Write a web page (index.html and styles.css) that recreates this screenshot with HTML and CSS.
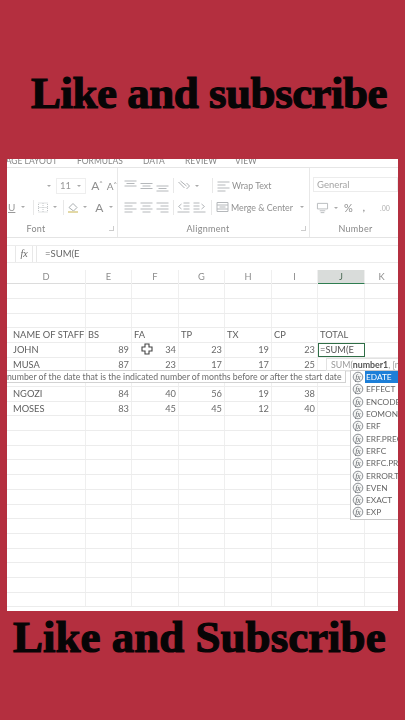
FILE: index.html
```html
<!DOCTYPE html>
<html lang="en">
<head>
<meta charset="utf-8">
<title>Like and subscribe</title>
<link rel="stylesheet" href="styles.css">
</head>
<body>
<svg class="defs" width="0" height="0" aria-hidden="true">
  <symbol id="lines-t" viewBox="0 0 14 12"><path d="M1 1h12M3 3.500h8M1 6h12" stroke="#b5b8bb" fill="none"/></symbol>
  <symbol id="lines-m" viewBox="0 0 14 12"><path d="M1 3.500h12M3 6h8M1 8.500h12" stroke="#b5b8bb" fill="none"/></symbol>
  <symbol id="lines-b" viewBox="0 0 14 12"><path d="M1 6h12M3 8.500h8M1 11h12" stroke="#b5b8bb" fill="none"/></symbol>
  <symbol id="lines-a" viewBox="0 0 14 12"><path d="M1 2h12M1 5h8M1 8h12M1 11h8" stroke="#b5b8bb" fill="none"/></symbol>
  <symbol id="lines-c" viewBox="0 0 14 12"><path d="M1 2h12M3 5h8M1 8h12M3 11h8" stroke="#b5b8bb" fill="none"/></symbol>
  <symbol id="lines-r" viewBox="0 0 14 12"><path d="M1 2h12M5 5h8M1 8h12M5 11h8" stroke="#b5b8bb" fill="none"/></symbol>
  <symbol id="fx" viewBox="0 0 12 12"><circle cx="6" cy="6" r="4.800" fill="#f4f5f4" stroke="#8d9196"/><text x="6" y="8.500" font-size="7.500" font-style="italic" font-family="Liberation Serif, serif" text-anchor="middle" fill="#5c6066">fx</text></symbol>
</svg>

<h1 class="title title-top">Like and subscribe</h1>

<main class="shot">
  <nav class="tabs">
    <span class="tab tab-page">PAGE LAYOUT</span>
    <span class="tab tab-formulas">FORMULAS</span>
    <span class="tab tab-data">DATA</span>
    <span class="tab tab-review">REVIEW</span>
    <span class="tab tab-view">VIEW</span>
  </nav>

  <section class="ribbon">
    <div class="group group-font">
      <div class="tools tools-font-1">
        <span class="arrow"></span>
        <span class="size-box"><span>11</span><span class="arrow"></span></span>
        <span class="glyph glyph-lg">A<sup>^</sup></span>
        <span class="glyph glyph-md">A<sup>^</sup></span>
      </div>
      <div class="tools tools-font-2">
        <span class="glyph u">U</span><span class="arrow"></span><span class="sep"></span>
        <svg class="ic" viewBox="0 0 14 12"><path d="M2.500 1.500h9v9h-9zM7 1.500v9M2.500 6h9" fill="none" stroke="#c3c6c8" stroke-dasharray="1 1"/></svg>
        <span class="arrow"></span><span class="sep sep-tight"></span>
        <svg class="ic" viewBox="0 0 14 13"><path d="M3 6.500 7 2.500l4 4-3.500 3.500z" fill="none" stroke="#a9aeb0"/><path d="M2 11h10" stroke="#e3d9a6" stroke-width="2"/></svg>
        <span class="arrow"></span>
        <span class="glyph glyph-a">A</span><span class="arrow arrow-last"></span>
      </div>
      <div class="group-label group-label-font"><span>Font</span><i class="launcher"></i></div>
    </div>

    <div class="group group-align">
      <div class="tools tools-align">
        <svg class="ic14"><use href="#lines-t"/></svg>
        <svg class="ic14"><use href="#lines-m"/></svg>
        <svg class="ic14"><use href="#lines-b"/></svg>
        <span class="sep"></span>
        <svg class="ic14" viewBox="0 0 14 12"><path d="M2 2l6 6M4 1l6 5M10 3l3 3-3 3" fill="none" stroke="#aeb1b4"/></svg>
        <span class="arrow"></span>
        <span class="sep sep-far"></span>
        <svg class="ic14"><use href="#lines-a"/></svg>
        <span class="label">Wrap Text</span>
      </div>
      <div class="tools tools-align">
        <svg class="ic14"><use href="#lines-a"/></svg>
        <svg class="ic14"><use href="#lines-c"/></svg>
        <svg class="ic14"><use href="#lines-r"/></svg>
        <span class="sep"></span>
        <svg class="ic14" viewBox="0 0 14 12"><path d="M7 2h6M7 5h6M7 8h6M1 11h12M5 3 2 5.500 5 8" fill="none" stroke="#b5b8bb"/></svg>
        <svg class="ic14" viewBox="0 0 14 12"><path d="M1 2h6M1 5h6M1 8h6M1 11h12M9 3l3 2.500L9 8" fill="none" stroke="#b5b8bb"/></svg>
        <span class="sep sep-near"></span>
        <svg class="ic14" viewBox="0 0 14 12"><path d="M1.500 1.500h11v9h-11zM1.500 4h11M1.500 8h11M4 6h6" fill="none" stroke="#b5b8bb"/></svg>
        <span class="label">Merge &amp; Center</span>
        <span class="arrow arrow-end"></span>
      </div>
      <div class="group-label group-label-align"><span>Alignment</span><i class="launcher"></i></div>
    </div>

    <div class="group group-number">
      <div class="general">General</div>
      <div class="tools tools-number">
        <svg class="ic14" viewBox="0 0 14 13"><path d="M1.500 1.500h11v6h-11zM4 9.500h6M5 11.500h4" fill="none" stroke="#b5b8bb"/></svg>
        <span class="arrow"></span>
        <span class="glyph pct">%</span>
        <span class="glyph comma">,</span>
        <span class="glyph dec">.00</span>
      </div>
      <div class="group-label"><span>Number</span></div>
    </div>
  </section>

  <div class="formula-bar">
    <span class="fx-btn">fx</span>
    <span class="formula-input">=SUM(E</span>
  </div>

  <section class="sheet">
    <div class="row row-head">
      <span class="c">D</span><span class="c">E</span><span class="c">F</span><span class="c">G</span><span class="c">H</span><span class="c">I</span><span class="c col-on">J</span><span class="c">K</span>
    </div>
    <div class="row"><span class="c"></span><span class="c"></span><span class="c"></span><span class="c"></span><span class="c"></span><span class="c"></span><span class="c"></span><span class="c"></span></div>
    <div class="row"><span class="c"></span><span class="c"></span><span class="c"></span><span class="c"></span><span class="c"></span><span class="c"></span><span class="c"></span><span class="c"></span></div>
    <div class="row"><span class="c"></span><span class="c"></span><span class="c"></span><span class="c"></span><span class="c"></span><span class="c"></span><span class="c"></span><span class="c"></span></div>
    <div class="row row-data">
      <span class="c">NAME OF STAFF</span><span class="c">BS</span><span class="c">FA</span><span class="c">TP</span><span class="c">TX</span><span class="c">CP</span><span class="c">TOTAL</span><span class="c"></span>
    </div>
    <div class="row row-data">
      <span class="c">JOHN</span><span class="c n">89</span><span class="c n">34</span><span class="c n">23</span><span class="c n">19</span><span class="c n">23</span><span class="c cell-on">=SUM(E</span><span class="c"></span>
    </div>
    <div class="row row-data">
      <span class="c">MUSA</span><span class="c n">87</span><span class="c n">23</span><span class="c n">17</span><span class="c n">17</span><span class="c n">25</span><span class="c"></span><span class="c"></span>
    </div>
    <div class="row"><span class="c"></span><span class="c"></span><span class="c"></span><span class="c"></span><span class="c"></span><span class="c"></span><span class="c"></span><span class="c"></span></div>
    <div class="row row-data">
      <span class="c">NGOZI</span><span class="c n">84</span><span class="c n">40</span><span class="c n">56</span><span class="c n">19</span><span class="c n">38</span><span class="c"></span><span class="c"></span>
    </div>
    <div class="row row-data">
      <span class="c">MOSES</span><span class="c n">83</span><span class="c n">45</span><span class="c n">45</span><span class="c n">12</span><span class="c n">40</span><span class="c"></span><span class="c"></span>
    </div>
    <div class="row"><span class="c"></span><span class="c"></span><span class="c"></span><span class="c"></span><span class="c"></span><span class="c"></span><span class="c"></span><span class="c"></span></div>
    <div class="row"><span class="c"></span><span class="c"></span><span class="c"></span><span class="c"></span><span class="c"></span><span class="c"></span><span class="c"></span><span class="c"></span></div>
    <div class="row"><span class="c"></span><span class="c"></span><span class="c"></span><span class="c"></span><span class="c"></span><span class="c"></span><span class="c"></span><span class="c"></span></div>
    <div class="row"><span class="c"></span><span class="c"></span><span class="c"></span><span class="c"></span><span class="c"></span><span class="c"></span><span class="c"></span><span class="c"></span></div>
    <div class="row"><span class="c"></span><span class="c"></span><span class="c"></span><span class="c"></span><span class="c"></span><span class="c"></span><span class="c"></span><span class="c"></span></div>
    <div class="row"><span class="c"></span><span class="c"></span><span class="c"></span><span class="c"></span><span class="c"></span><span class="c"></span><span class="c"></span><span class="c"></span></div>
    <div class="row"><span class="c"></span><span class="c"></span><span class="c"></span><span class="c"></span><span class="c"></span><span class="c"></span><span class="c"></span><span class="c"></span></div>
    <div class="row"><span class="c"></span><span class="c"></span><span class="c"></span><span class="c"></span><span class="c"></span><span class="c"></span><span class="c"></span><span class="c"></span></div>
    <div class="row"><span class="c"></span><span class="c"></span><span class="c"></span><span class="c"></span><span class="c"></span><span class="c"></span><span class="c"></span><span class="c"></span></div>
    <div class="row"><span class="c"></span><span class="c"></span><span class="c"></span><span class="c"></span><span class="c"></span><span class="c"></span><span class="c"></span><span class="c"></span></div>
    <div class="row"><span class="c"></span><span class="c"></span><span class="c"></span><span class="c"></span><span class="c"></span><span class="c"></span><span class="c"></span><span class="c"></span></div>
    <div class="row"><span class="c"></span><span class="c"></span><span class="c"></span><span class="c"></span><span class="c"></span><span class="c"></span><span class="c"></span><span class="c"></span></div>
    <div class="row"><span class="c"></span><span class="c"></span><span class="c"></span><span class="c"></span><span class="c"></span><span class="c"></span><span class="c"></span><span class="c"></span></div>

    <svg class="cursor" viewBox="0 0 12 12"><path d="M4 1h4v3h3v4H8v3H4V8H1V4h3z" fill="#fff" stroke="#444" stroke-width="1.100"/></svg>

    <div class="hint-desc">number of the date that is the indicated number of months before or after the start date</div>
    <div class="hint-sum">SUM(<b>number1</b>, [n</div>
    <ul class="suggest">
      <li class="on"><svg class="fn"><use href="#fx"/></svg><span>EDATE</span></li>
      <li><svg class="fn"><use href="#fx"/></svg><span>EFFECT</span></li>
      <li><svg class="fn"><use href="#fx"/></svg><span>ENCODEURL</span></li>
      <li><svg class="fn"><use href="#fx"/></svg><span>EOMONTH</span></li>
      <li><svg class="fn"><use href="#fx"/></svg><span>ERF</span></li>
      <li><svg class="fn"><use href="#fx"/></svg><span>ERF.PRECISE</span></li>
      <li><svg class="fn"><use href="#fx"/></svg><span>ERFC</span></li>
      <li><svg class="fn"><use href="#fx"/></svg><span>ERFC.PRECISE</span></li>
      <li><svg class="fn"><use href="#fx"/></svg><span>ERROR.TYPE</span></li>
      <li><svg class="fn"><use href="#fx"/></svg><span>EVEN</span></li>
      <li><svg class="fn"><use href="#fx"/></svg><span>EXACT</span></li>
      <li><svg class="fn"><use href="#fx"/></svg><span>EXP</span></li>
    </ul>
  </section>
</main>

<h2 class="title title-bottom">Like and Subscribe</h2>
</body>
</html>
```
FILE: styles.css
```css
* { box-sizing: border-box; }
html, body { margin: 0; padding: 0; }
body {
  width: 405px;
  height: 720px;
  overflow: hidden;
  background: #b42f3f;
  font-family: "Lato", "Liberation Sans", sans-serif;
  display: flex;
  flex-direction: column;
}
.defs { position: absolute; }

.title {
  margin: 0;
  color: #070506;
  font-family: "Liberation Serif", serif;
  font-weight: 700;
  font-size: 45px;
  line-height: 50px;
  white-space: nowrap;
  -webkit-text-stroke: 1.2px #070506;
}
.title-top { padding: 68px 0 0 31px; height: 159px; letter-spacing: -0.5px; }
.title-bottom { padding: 1px 0 0 13px; letter-spacing: 0; }

.shot {
  width: 391px;
  height: 452px;
  margin-left: 7px;
  background: #fff;
  color: #666;
  overflow: hidden;
  flex: none;
  display: flex;
  flex-direction: column;
  filter: blur(0.4px);
}

/* tabs */
.tabs {
  height: 9px;
  border-bottom: 1px solid #e6e6e6;
  display: flex;
  flex: none;
  font-size: 8.500px;
  color: #888;
  line-height: 4px;
  white-space: nowrap;
  overflow: hidden;
}
.tab { display: block; flex: none; }
.tab-page { width: 76px; margin-left: -6px; }
.tab-formulas { width: 66px; }
.tab-data { width: 42px; }
.tab-review { width: 50px; }

/* ribbon */
.ribbon {
  height: 70px;
  display: flex;
  background: #fff;
  border-bottom: 1px solid #e4e4e4;
  flex: none;
}
.group { display: flex; flex-direction: column; border-right: 1px solid #e8e8e8; }
.group-font { width: 111px; padding-top: 9px; }
.group-align { width: 192px; padding-top: 9px; padding-left: 5px; }
.group-number { flex: 1; border-right: 0; padding: 9px 0 0 3px; }
.tools { display: flex; align-items: center; flex: none; font-size: 9.500px; color: #9b9b9b; white-space: nowrap; }
.tools-font-1 { padding-left: 37px; height: 17px; margin-bottom: 2px; }
.tools-font-2 { padding-left: 1px; height: 22px; }
.arrow { width: 0; height: 0; border: 2px solid transparent; border-top: 2.500px solid #aaa; border-bottom: 0; margin: 0 3px; flex: none; }
.arrow-last { margin-left: 6px; }
.size-box {
  display: flex; align-items: center; justify-content: space-between;
  width: 31px; height: 16px; margin-left: 2px;
  border: 1px solid #eee; padding: 0 1px 0 3px; color: #999;
}
.glyph { color: #8f8f8f; flex: none; }
.glyph sup { font-size: 6px; line-height: 0; }
.glyph-lg { font-size: 12px; margin-left: 5px; }
.glyph-md { font-size: 10px; margin-left: 4px; }
.u { text-decoration: underline; font-size: 10px; color: #999; margin-right: 3px; }
.sep { width: 1px; height: 15px; background: #e8e8e8; margin: 0 1px 0 5px; flex: none; }
.sep-tight { margin-left: 3px; }
.ic { width: 14px; height: 13px; flex: none; margin-left: 1px; }
.ic14 { width: 15px; height: 12px; flex: none; margin-right: 1px; }
.glyph-a { font-size: 12px; margin-left: 5px; color: #8d8d8d; }
.tools-align { height: 17px; margin-bottom: 2px; }
.tools-align + .tools-align { height: 22px; margin-bottom: 0; }
.tools-align .sep { margin: 0 2px; }
.tools-align .sep-far { margin: 0 3px 0 10px; }
.tools-align .sep-near { margin: 0 3px; }
.label { font-size: 8.800px; color: #909090; }
.arrow-end { margin-left: 7px; }
.group-label {
  height: 13px; display: flex; align-items: center; justify-content: center;
  position: relative; font-size: 9px; color: #888; letter-spacing: 0.3px; flex: none; margin-top: 4px;
}
.group-label-font { padding-right: 52px; }
.group-label-align { padding-right: 16px; }
.group-number .group-label { margin-top: 6px; }
.launcher { position: absolute; right: 3px; top: 4px; width: 5px; height: 5px; border-right: 1px solid #ccc; border-bottom: 1px solid #ccc; }
.general { height: 15px; width: 85px; border: 1px solid #ececec; font-size: 9.500px; color: #a5a5a5; padding-left: 3px; line-height: 13px; margin-bottom: 7px; flex: none; }
.tools-number { height: 17px; padding-left: 2px; }
.pct { font-size: 11px; margin-left: 3px; }
.comma { margin-left: 10px; font-weight: 700; }
.dec { margin-left: 15px; font-size: 7px; color: #b0b0b0; }

/* formula bar */
.formula-bar {
  height: 18px;
  margin-top: 7px;
  flex: none;
  display: flex;
  border-top: 1px solid #ececec;
  border-bottom: 1px solid #ececec;
}
.fx-btn { width: 18px; margin-left: 8px; border-left: 1px solid #e8e8e8; border-right: 1px solid #e8e8e8; font-family: "Liberation Serif", serif; font-style: italic; font-size: 10px; color: #666; text-align: center; line-height: 16px; }
.formula-input { flex: 1; margin-left: 3px; border-left: 1px solid #e8e8e8; padding-left: 8px; font-size: 9.500px; line-height: 15px; color: #666; }

/* sheet */
.sheet { position: relative; margin-top: 7px; flex: none; }
.row {
  display: grid;
  grid-template-columns: 79px 46px 47px 46px 47px 46px 47px 33px;
  height: 14.700px;
  border-bottom: 1px solid #ececec;
  font-size: 9.300px;
  line-height: 13.700px;
  color: #5f5f5f;
  white-space: nowrap;
}
.c { border-right: 1px solid #efefef; padding: 0 2px; min-width: 0; }
.c:last-child { border-right: 0; }
.row-head { height: 14.200px; line-height: 13px; color: #8d8d8d; border-bottom-color: #dcdcdc; }
.row-head .c { text-align: center; }
.row-data .c:first-child { padding-left: 6px; }
.n { text-align: right; color: #6b6b6b; }
.col-on { background: #d9dcda; border-bottom: 1px solid #2f7d50; color: #4c6a55; }
.cell-on { outline: 1.500px solid #2f6e46; outline-offset: -1px; color: #555; overflow: hidden; }

.cursor { position: absolute; left: 134px; top: 73px; width: 12px; height: 12px; }

.hint-desc {
  position: absolute; left: 0; top: 100px; width: 339px; height: 13px;
  background: #fff; border: 1px solid #d2d2d2; border-left: 0;
  font-size: 8.730px; line-height: 11px; color: #6c6c6c; white-space: nowrap; overflow: hidden;
}
.hint-sum {
  position: absolute; left: 319px; top: 88px; width: 72px; height: 13px;
  background: #fff; border: 1px solid #e2e2e2; border-right: 0;
  font-size: 8.800px; line-height: 11px; padding-left: 4px; color: #9a9a9a; white-space: nowrap; overflow: hidden;
}
.hint-sum b { color: #555; }
.suggest {
  position: absolute; left: 343px; top: 100px; width: 48px; height: 150px;
  margin: 0; padding: 0; list-style: none;
  background: #fff; border: 1px solid #c9c9c9; border-right: 0;
  overflow: hidden;
}
.suggest li { display: flex; align-items: center; height: 12.300px; padding-left: 1px; font-size: 8.300px; color: #666; white-space: nowrap; }
.suggest li span { padding-left: 1px; flex: 1; }
.suggest .on span { background: #1d7fd8; color: #fff; height: 100%; line-height: 12px; }
.fn { width: 12px; height: 12px; flex: none; margin-right: 1px; }
```
